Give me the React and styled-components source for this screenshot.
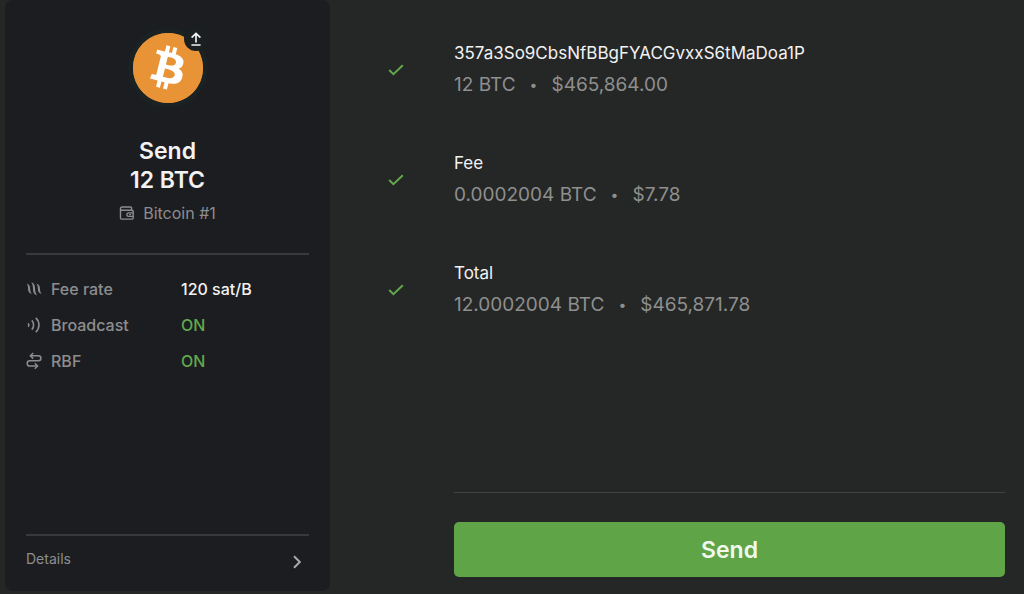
import React from "react";
import styled, { createGlobalStyle } from "styled-components";
import { SiBitcoin } from "react-icons/si";

const params = [
  { label: "Fee rate", value: "120 sat/B", icon: FeeIcon },
  { label: "Broadcast", value: "ON", on: true, icon: BroadcastIcon },
  { label: "RBF", value: "ON", on: true, icon: ReplaceIcon },
];

const outputs = [
  {
    title: "357a3So9CbsNfBBgFYACGvxxS6tMaDoa1P",
    amount: "12 BTC",
    fiat: "$465,864.00",
  },
  { title: "Fee", amount: "0.0002004 BTC", fiat: "$7.78" },
  { title: "Total", amount: "12.0002004 BTC", fiat: "$465,871.78" },
];

export default function App() {
  return (
    <>
      <GlobalStyle />
      <Layout>
        <Sidebar>
          <Summary>
            <Coin>
              <SiBitcoin />
              <Badge>
                <SendIcon />
              </Badge>
            </Coin>
            <Heading>
              Send
              <br />
              12 BTC
            </Heading>
            <Account>
              <WalletIcon />
              Bitcoin #1
            </Account>
          </Summary>

          <Params>
            {params.map(({ label, value, on, icon: Icon }) => (
              <Param key={label}>
                <ParamLabel>
                  <Icon />
                  {label}
                </ParamLabel>
                <ParamValue $on={on}>{value}</ParamValue>
              </Param>
            ))}
          </Params>

          <DetailsButton type="button">
            Details
            <ChevronIcon />
          </DetailsButton>
        </Sidebar>

        <Main>
          <Outputs>
            {outputs.map((item) => (
              <Output key={item.title}>
                <CheckIcon />
                <div>
                  <OutputTitle>{item.title}</OutputTitle>
                  <OutputAmount>
                    <span>{item.amount}</span>
                    <Dot>•</Dot>
                    <span>{item.fiat}</span>
                  </OutputAmount>
                </div>
              </Output>
            ))}
          </Outputs>
          <Footer>
            <SendButton type="button">Send</SendButton>
          </Footer>
        </Main>
      </Layout>
    </>
  );
}

function SendIcon() {
  return (
    <svg width="12" height="14" viewBox="0 0 12 14" fill="none" stroke="#f2f2f2" strokeWidth="1.7">
      <path d="M6 10.5V1.4M1.6 5.6L6 1.4l4.4 4.2M1.4 13h9.2" />
    </svg>
  );
}

function WalletIcon() {
  return (
    <svg width="16" height="16" viewBox="0 0 16 16" fill="none" stroke="currentColor" strokeWidth="1.4">
      <path d="M12.600 5.200V3a1 1 0 0 0-1-1H3a1.600 1.600 0 0 0 0 3.200h10.200a1 1 0 0 1 1 1v6.900a1 1 0 0 1-1 1H2.500a1 1 0 0 1-1-1V3.600" />
      <path d="M14.200 7.900H9.600a1.700 1.700 0 0 0 0 3.500h4.600" />
      <path d="M10.200 9.650h1.800" />
    </svg>
  );
}

function FeeIcon() {
  return (
    <svg width="16" height="16" viewBox="0 0 16 16" fill="currentColor">
      <path d="M.6 2.600C3 3.200 4 4.800 4.100 7.300c.1 2.300.3 4 1.800 5.800C3.200 12.300 2.200 10.700 2.100 8.300 2 5.900 1.900 4.300.6 2.600z" />
      <path d="M5.200 1.200c2.700.8 3.700 2.900 3.800 5.900.1 2.800.4 5 2 7.300-2.900-.9-3.900-3-4-6C6.900 5.500 6.800 3.400 5.200 1.200z" />
      <path d="M10.400 2.600c2.400.6 3.400 2.200 3.500 4.700.1 2.300.3 4 1.800 5.800-2.700-.8-3.700-2.400-3.800-4.800-.1-2.400-.2-4-1.500-5.700z" />
    </svg>
  );
}

function BroadcastIcon() {
  return (
    <svg width="16" height="16" viewBox="0 0 16 16" fill="none" stroke="currentColor" strokeWidth="1.6">
      <path d="M2.200 6.200c.8 1 .8 2.600 0 3.600" />
      <path d="M5.800 3.400c2.400 2.600 2.400 6.600 0 9.200" />
      <path d="M9.800.8c4.200 4 4.200 10.400 0 14.400" />
    </svg>
  );
}

function ReplaceIcon() {
  return (
    <svg width="16" height="18" viewBox="0 0 16 18" fill="none" stroke="currentColor" strokeWidth="1.5">
      <path d="M4.600 3.800h7.800a2.500 2.500 0 0 1 0 5H3.800a2.600 2.600 0 0 0 0 5.200h7.400" />
      <path d="M7.200 1L4.400 3.800l2.800 2.800" />
      <path d="M8.800 11.200l2.800 2.800-2.800 2.800" />
    </svg>
  );
}

function ChevronIcon() {
  return (
    <svg width="10" height="14" viewBox="0 0 10 14" fill="none" stroke="#a9a9ab" strokeWidth="2">
      <path d="M2 1.200L7.800 7 2 12.800" />
    </svg>
  );
}

function CheckIcon() {
  return (
    <svg width="16" height="12" viewBox="0 0 16 12" fill="none" stroke="#62a84c" strokeWidth="2">
      <path d="M1.200 6l4.200 4.200L14.800 1.200" />
    </svg>
  );
}

const GlobalStyle = createGlobalStyle`
  * {
    box-sizing: border-box;
  }
  body {
    margin: 0;
    background: #252726;
    color: #f2f2f3;
    font-family: Inter, "Liberation Sans", sans-serif;
  }
  h1, dl, dd, ul, p {
    margin: 0;
    padding: 0;
  }
  button {
    font-family: inherit;
    cursor: pointer;
  }
`;

const Layout = styled.div`
  display: grid;
  grid-template-columns: 325px 1fr;
  min-height: 100vh;
  padding-left: 5px;
`;

const Sidebar = styled.aside`
  display: flex;
  flex-direction: column;
  margin-bottom: 3px;
  padding: 33px 21px 12px;
  border-radius: 8px;
  background: #1c1d20;
`;

const Summary = styled.header`
  display: flex;
  flex-direction: column;
  align-items: center;
  padding-bottom: 30px;
  border-bottom: 2px solid #38393b;
`;

const Coin = styled.div`
  position: relative;
  width: 70px;
  height: 70px;
  border-radius: 50%;
  background: radial-gradient(#fff 60%, #e99337 62%);
  box-shadow: 0 0 0 5px #1a2224;
  color: #e99337;

  > svg {
    display: block;
    width: 100%;
    height: 100%;
  }
`;

const Badge = styled.span`
  position: absolute;
  top: -6px;
  right: -5px;
  display: flex;
  align-items: center;
  justify-content: center;
  width: 24px;
  height: 24px;
  border-radius: 50%;
  background: #1b1f21;
`;

const Heading = styled.h1`
  margin-top: 34px;
  font-size: 23px;
  font-weight: 600;
  line-height: 29px;
  text-align: center;
`;

const Account = styled.p`
  display: flex;
  align-items: center;
  gap: 8px;
  margin-top: 8px;
  color: #8d8d90;
  font-size: 16px;
  line-height: 20px;
`;

const Params = styled.dl`
  flex: 1;
  padding: 16px 0;
`;

const Param = styled.div`
  display: grid;
  grid-template-columns: 155px 1fr;
  font-size: 16px;
  font-weight: 500;
  line-height: 36px;
`;

const ParamLabel = styled.dt`
  display: flex;
  align-items: center;
  gap: 9px;
  color: #8d8d90;
`;

const ParamValue = styled.dd`
  color: ${({ $on }) => ($on ? "#62a84c" : "#f2f2f3")};
`;

const DetailsButton = styled.button`
  display: flex;
  align-items: flex-start;
  justify-content: space-between;
  padding: 14px 7px 10px 0;
  border: 0;
  border-top: 2px solid #38393b;
  background: none;
  color: #8d8d90;
  font-size: 14px;
  line-height: 18px;

  svg {
    margin-top: 5px;
  }
`;

const Main = styled.main`
  display: flex;
  flex-direction: column;
  padding: 41px 19px 17px 58px;
`;

const Outputs = styled.ul`
  display: flex;
  flex: 1;
  flex-direction: column;
  gap: 52px;
  list-style: none;
`;

const Output = styled.li`
  display: grid;
  grid-template-columns: 16px 1fr;
  align-items: center;
  gap: 50px;
`;

const OutputTitle = styled.p`
  font-size: 17px;
  line-height: 24px;
`;

const OutputAmount = styled.p`
  display: flex;
  gap: 14px;
  margin-top: 6px;
  color: #8e8f8e;
  font-size: 19px;
  line-height: 28px;
`;

const Dot = styled.span`
  font-size: 14px;
`;

const Footer = styled.footer`
  margin-left: 66px;
  padding-top: 29px;
  border-top: 1px solid #414342;
`;

const SendButton = styled.button`
  width: 100%;
  height: 55px;
  border: 0;
  border-radius: 5px;
  background: #5fa548;
  color: #f1f9ee;
  font-size: 23px;
  font-weight: 600;
`;
